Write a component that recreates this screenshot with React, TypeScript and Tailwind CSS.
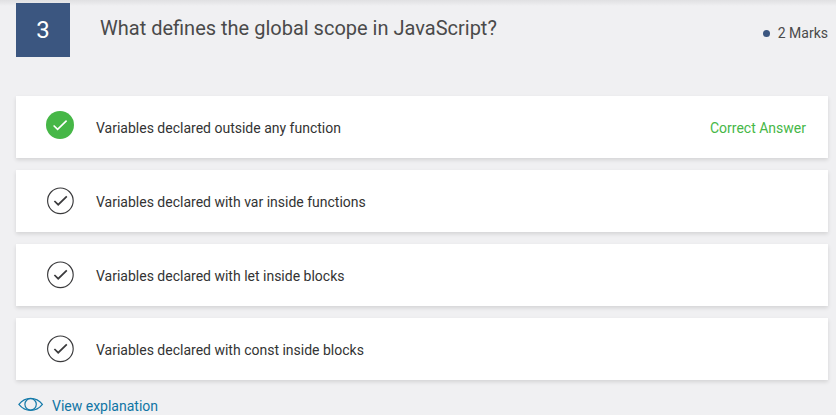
type Answer = { text: string; correct?: boolean };

const answers: Answer[] = [
  { text: "Variables declared outside any function", correct: true },
  { text: "Variables declared with var inside functions" },
  { text: "Variables declared with let inside blocks" },
  { text: "Variables declared with const inside blocks" },
];

function CorrectIcon() {
  return (
    <svg className="-mt-1 ml-[30px] size-7 shrink-0" viewBox="0 0 28 28" fill="none">
      <circle cx="14" cy="14" r="14" fill="#46b747" />
      <path d="M7.600 14.500l4 3.900 9-8.800" stroke="#fff" strokeWidth="1.600" />
    </svg>
  );
}

function CheckIcon() {
  return (
    <svg className="ml-[30px] size-7 shrink-0" viewBox="0 0 28 28" fill="none" stroke="#3a3a3c">
      <circle cx="14.400" cy="13.800" r="12.800" strokeWidth="1.150" />
      <path d="M8.400 14l3.800 3.700 8.600-8.400" strokeWidth="1.700" />
    </svg>
  );
}

function EyeIcon() {
  return (
    <svg className="h-4 w-7 shrink-0" viewBox="0 0 28 16" fill="none" stroke="#1379a9" strokeWidth="1.200">
      <path d="M2.900 8.300C6.200 4.200 10 2.300 14.600 2.300S23.200 4.200 26.400 8.300C23.200 12.400 19.200 14.300 14.600 14.300S6.200 12.400 2.900 8.300Z" />
      <circle cx="14.600" cy="8.300" r="5.700" />
    </svg>
  );
}

export default function App() {
  return (
    <main className="h-[415px] overflow-hidden bg-[#f0f0f2] bg-linear-to-b from-[#e0e0e2] to-[#f0f0f2] to-[6px] pt-[3px] font-['Roboto',sans-serif] antialiased">
      <header className="flex h-[93px] items-start pr-2 pl-4">
        <div className="flex size-[54px] items-center justify-center bg-[#3b5680] text-2xl text-white">3</div>
        <h1 className="mt-[11px] ml-[30px] text-xl leading-7 text-[#4a4a4a]">
          What defines the global scope in JavaScript?
        </h1>
        <div className="mt-5 ml-auto flex items-center gap-2 text-sm leading-5 text-[#4a4a4a]">
          <span className="size-[7px] rounded-full bg-[#3b5680]" />
          2 Marks
        </div>
      </header>
      <ul className="flex flex-col gap-3 pr-2 pl-4">
        {answers.map((answer) => (
          <li
            key={answer.text}
            className="flex h-[62px] items-center bg-white text-sm text-[#333] shadow-[0_2px_4px_rgba(0,0,0,0.12)]"
          >
            {answer.correct ? <CorrectIcon /> : <CheckIcon />}
            <span className="ml-[22px] pt-0.5">{answer.text}</span>
            {answer.correct && <span className="mr-[22px] ml-auto pt-0.5 text-[#46b747]">Correct Answer</span>}
          </li>
        ))}
      </ul>
      <a className="mt-4 ml-4 flex w-fit items-start gap-2 text-sm leading-5 text-[#0f75a5]">
        <EyeIcon />
        View explanation
      </a>
    </main>
  );
}
